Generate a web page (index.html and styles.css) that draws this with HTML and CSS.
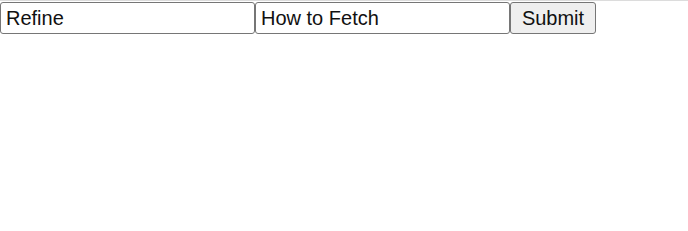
FILE: index.html
```html
<!DOCTYPE html>
<html lang="en">
<head>
    <meta charset="UTF-8">
    <title>Fetch</title>
    <link rel="stylesheet" href="styles.css">
</head>
<body>
    <form class="search">
        <input class="field" type="text" value="Refine">
        <input class="field" type="text" value="How to Fetch">
        <button class="submit" type="button">Submit</button>
    </form>
</body>
</html>
```

FILE: styles.css
```css
body{
    margin: 0;
    border-top: 1px solid #dcdcdc;
    font-family: "Liberation Sans", Arial, sans-serif;
}
.search{
    display: flex;
    padding-top: 1px;
}
.field{
    width: 255px;
    height: 32px;
    box-sizing: border-box;
    margin: 0;
    padding: 0 5px;
    border: 1px solid #767676;
    border-radius: 3px;
    font-family: "Liberation Sans", Arial, sans-serif;
    font-size: 20px;
    color: #111;
    background: #fff;
}
.submit{
    width: 86px;
    height: 32px;
    box-sizing: border-box;
    margin: 0;
    padding: 0 10px;
    border: 1px solid #767676;
    border-radius: 3px;
    background: #efefef;
    font-family: "Liberation Sans", Arial, sans-serif;
    font-size: 20px;
    color: #111;
}
```
